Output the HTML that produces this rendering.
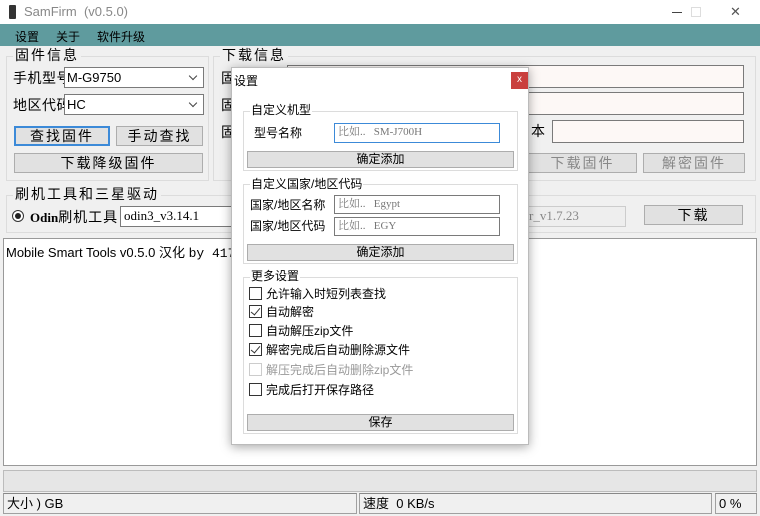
<!DOCTYPE html>
<html><head><meta charset="utf-8"><style>
*{box-sizing:border-box;margin:0;padding:0}
body{width:760px;height:516px;position:relative;background:#f0f0f0;font-family:"Liberation Sans","Noto Sans CJK SC",sans-serif;overflow:hidden;color:#000}
.a{position:absolute}
.grp{position:absolute;border:1px solid #dcdcdc}
.lg{position:absolute;background:#f0f0f0;padding:0 2px;font-size:14px;line-height:16px}
.lbl{position:absolute;font-size:14px;line-height:16px;letter-spacing:0.5px}
.combo{position:absolute;background:#fff;border:1px solid #7a7a7a;font-size:13px;line-height:19px;padding-left:2px}
.combo:after{content:"";position:absolute;right:7px;top:5px;width:5px;height:5px;border-right:1px solid #444;border-bottom:1px solid #444;transform:rotate(45deg)}
.btn{position:absolute;background:#e1e1e1;border:1px solid #adadad;text-align:center;font-size:14px;letter-spacing:2px}
.inp{position:absolute;background:#fdf8f6;border:1px solid #7a7a7a}
.dlg{position:absolute;left:231px;top:67px;width:298px;height:378px;background:#fff;border:1px solid #bbb;box-shadow:0 2px 10px rgba(0,0,0,.35)}
.d{position:absolute;font-size:12px;line-height:14px}
.dg{position:absolute;border:1px solid #dcdcdc}
.dl{position:absolute;background:#fff;padding:0 1px;font-size:12px;line-height:14px}
.di{position:absolute;border:1px solid #7a7a7a;background:#fff;font-family:"Liberation Serif","Noto Serif CJK SC",serif;font-size:11px;color:#777;padding-left:3px;line-height:17px}
.db{position:absolute;background:#e1e1e1;border:1px solid #adadad;text-align:center;font-size:12px;line-height:15px}
.cb{position:absolute;width:13px;height:13px;border:1px solid #333;background:#fff}
.ck:after{content:"";position:absolute;left:3px;top:0px;width:4px;height:8px;border-right:1.5px solid #333;border-bottom:1.5px solid #333;transform:rotate(40deg)}
.st{position:absolute;border:1px solid #a0a0a0;border-top-color:#888;background:#f0f0f0;font-size:13px;line-height:19px;padding-left:3px}
</style></head><body>
<div class="a" style="left:0;top:0;width:760px;height:24px;background:#fff"></div>
<div class="a" style="left:9px;top:5px;width:7px;height:14px;background:#333;border-radius:1px"></div>
<div class="a" style="left:24px;top:4px;font-size:13px;color:#888">SamFirm &nbsp;(v0.5.0)</div>
<div class="a" style="left:672px;top:12px;width:10px;height:1px;background:#444"></div>
<div class="a" style="left:691px;top:7px;width:10px;height:10px;border:1px solid #ddd"></div>
<div class="a" style="left:730px;top:4px;font-size:13px;color:#555">✕</div>
<div class="a" style="left:0;top:24px;width:760px;height:22px;background:#5f9b9e"></div>
<div class="a" style="left:15px;top:28px;font-size:12px">设置</div>
<div class="a" style="left:56px;top:28px;font-size:12px">关于</div>
<div class="a" style="left:97px;top:28px;font-size:12px">软件升级</div>

<div class="grp" style="left:6px;top:56px;width:203px;height:125px"></div>
<div class="lg" style="left:13px;top:47px;letter-spacing:2px">固件信息</div>
<div class="lbl" style="left:13px;top:70px">手机型号</div>
<div class="combo" style="left:64px;top:67px;width:140px;height:21px">M-G9750</div>
<div class="lbl" style="left:13px;top:97px">地区代码</div>
<div class="combo" style="left:64px;top:94px;width:140px;height:21px">HC</div>
<div class="btn" style="left:14px;top:126px;width:96px;height:20px;border:2px solid #3c8ad8;line-height:16px">查找固件</div>
<div class="btn" style="left:116px;top:126px;width:87px;height:20px;line-height:18px">手动查找</div>
<div class="btn" style="left:14px;top:153px;width:189px;height:20px;line-height:18px">下载降级固件</div>

<div class="grp" style="left:213px;top:56px;width:543px;height:125px"></div>
<div class="lg" style="left:220px;top:47px;letter-spacing:2px">下载信息</div>
<div class="lbl" style="left:221px;top:70px">固</div>
<div class="lbl" style="left:221px;top:97px">固</div>
<div class="lbl" style="left:221px;top:124px">固</div>
<div class="inp" style="left:287px;top:65px;width:457px;height:23px"></div>
<div class="inp" style="left:287px;top:92px;width:457px;height:23px"></div>
<div class="lbl" style="left:531px;top:123px">本</div>
<div class="inp" style="left:552px;top:120px;width:192px;height:23px"></div>
<div class="btn" style="left:528px;top:153px;width:109px;height:20px;line-height:18px;color:#888">下载固件</div>
<div class="btn" style="left:643px;top:153px;width:102px;height:20px;line-height:18px;color:#888">解密固件</div>

<div class="grp" style="left:6px;top:195px;width:750px;height:38px"></div>
<div class="lg" style="left:13px;top:186px;letter-spacing:2px">刷机工具和三星驱动</div>
<div class="a" style="left:12px;top:210px;width:12px;height:12px;border:1px solid #333;border-radius:50%;background:#fff"></div>
<div class="a" style="left:15px;top:213px;width:6px;height:6px;border-radius:50%;background:#222"></div>
<div class="a" style="left:30px;top:207px;font-size:13px;font-family:'Liberation Serif','Noto Sans CJK SC',serif;font-weight:bold">Odin<span style="font-weight:normal;font-family:'Noto Sans CJK SC';font-size:14px;letter-spacing:1px">刷机工具</span></div>
<div class="a" style="left:120px;top:206px;width:120px;height:21px;border:1px solid #7a7a7a;background:#fff;font-family:'Liberation Serif',serif;font-size:13px;line-height:18px;padding-left:3px">odin3_v3.14.1</div>
<div class="a" style="left:500px;top:206px;width:126px;height:21px;border:1px solid #ccc;background:#eee;font-family:'Liberation Serif',serif;font-size:13px;line-height:18px;color:#888;padding-left:28px">r_v1.7.23</div>
<div class="btn" style="left:644px;top:205px;width:99px;height:20px;line-height:18px">下载</div>

<div class="a" style="left:3px;top:238px;width:754px;height:228px;background:#fff;border:1px solid #999"></div>
<div class="a" style="left:6px;top:242px;font-size:13px">Mobile Smart Tools v0.5.0 汉化 <span style="font-family:'Liberation Mono',monospace">by 41778</span></div>

<div class="a" style="left:3px;top:470px;width:754px;height:22px;background:#e6e6e6;border:1px solid #bcbcbc"></div>
<div class="st" style="left:3px;top:493px;width:354px;height:21px">大小 ) GB</div>
<div class="st" style="left:359px;top:493px;width:353px;height:21px">速度 &nbsp;0 KB/s</div>
<div class="st" style="left:715px;top:493px;width:42px;height:21px">0 %</div>

<div class="dlg">
<div class="d" style="left:2px;top:6px">设置</div>
<div class="a" style="left:279px;top:4px;width:17px;height:17px;background:#c9403e;color:#fff;font-size:10px;text-align:center;line-height:16px">x</div>
<div class="dg" style="left:11px;top:43px;width:275px;height:60px"></div>
<div class="dl" style="left:18px;top:35px">自定义机型</div>
<div class="d" style="left:22px;top:58px">型号名称</div>
<div class="di" style="left:102px;top:55px;width:166px;height:20px;border-color:#3c8ad8">比如.. &nbsp; SM-J700H</div>
<div class="db" style="left:15px;top:83px;width:267px;height:17px">确定添加</div>
<div class="dg" style="left:11px;top:116px;width:275px;height:80px"></div>
<div class="dl" style="left:18px;top:109px">自定义国家/地区代码</div>
<div class="d" style="left:18px;top:130px">国家/地区名称</div>
<div class="di" style="left:102px;top:127px;width:166px;height:19px">比如.. &nbsp; Egypt</div>
<div class="d" style="left:18px;top:151px">国家/地区代码</div>
<div class="di" style="left:102px;top:149px;width:166px;height:19px">比如.. &nbsp; EGY</div>
<div class="db" style="left:15px;top:176px;width:267px;height:17px">确定添加</div>
<div class="dg" style="left:11px;top:209px;width:275px;height:157px"></div>
<div class="dl" style="left:18px;top:201px">更多设置</div>
<div class="cb" style="left:17px;top:219px"></div><div class="d" style="left:34px;top:219px">允许输入时短列表查找</div>
<div class="cb ck" style="left:17px;top:237px"></div><div class="d" style="left:34px;top:237px">自动解密</div>
<div class="cb" style="left:17px;top:256px"></div><div class="d" style="left:34px;top:256px">自动解压zip文件</div>
<div class="cb ck" style="left:17px;top:275px"></div><div class="d" style="left:34px;top:275px">解密完成后自动删除源文件</div>
<div class="cb" style="left:17px;top:295px;border-color:#ccc"></div><div class="d" style="left:34px;top:295px;color:#999">解压完成后自动删除zip文件</div>
<div class="cb" style="left:17px;top:315px"></div><div class="d" style="left:34px;top:315px">完成后打开保存路径</div>
<div class="db" style="left:15px;top:346px;width:267px;height:17px">保存</div>
</div>
</body></html>
